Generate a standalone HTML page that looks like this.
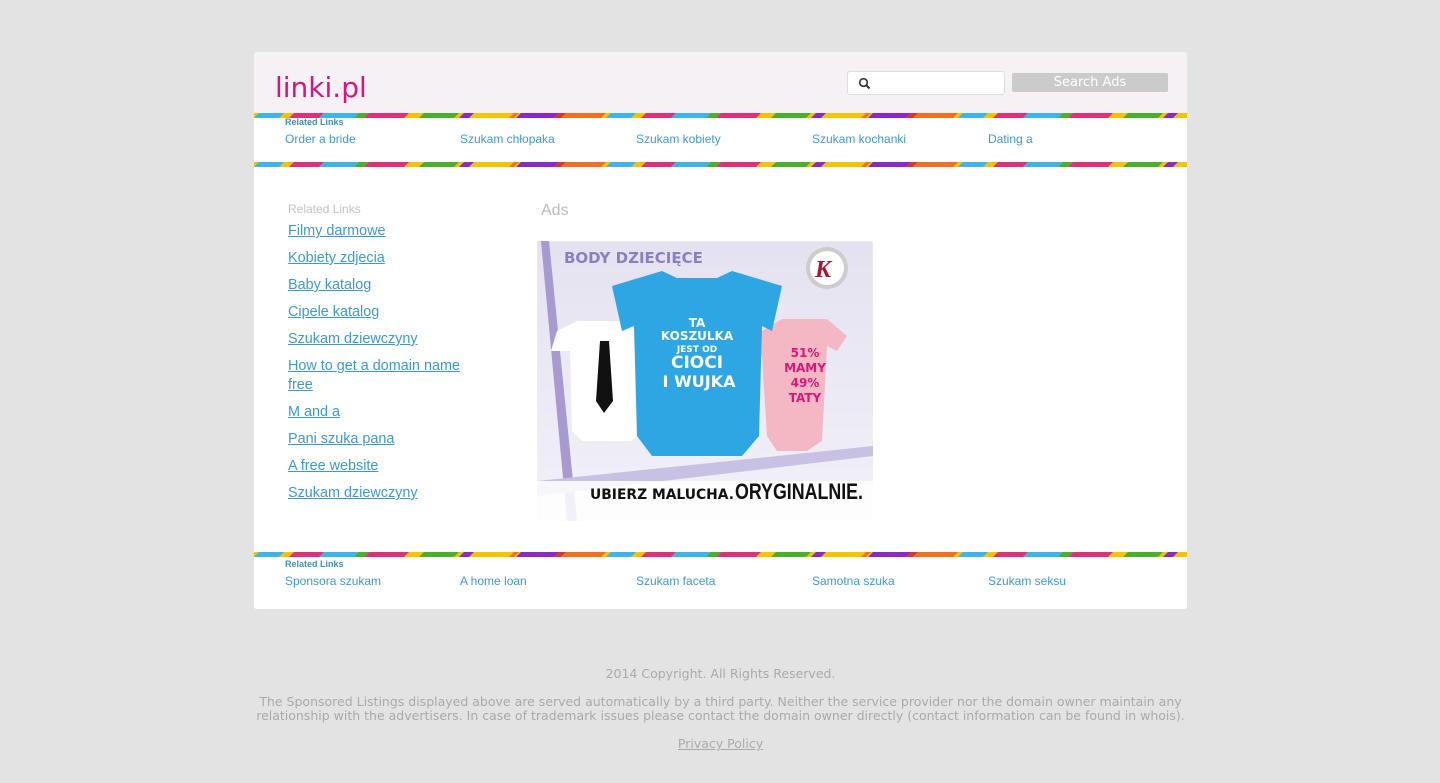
<!DOCTYPE html>
<html><head><meta charset="utf-8"><style>
body{margin:0;background:#e3e3e3;font-family:"DejaVu Sans","Liberation Sans",sans-serif;}
#box{position:absolute;left:254px;top:52px;width:933px;height:557px;background:#fff;border-radius:3px;overflow:hidden}
#hdr{height:61px;background:#f6f1f5}
#logo{position:absolute;left:21px;top:19px;font-size:28px;color:#d6167d;font-family:"DejaVu Sans",sans-serif}
#sinput{position:absolute;left:593px;top:19px;width:156px;height:22px;background:#fff;border:1px solid #e0dde0;border-radius:3px}
#sbtn{position:absolute;left:758px;top:21px;width:156px;height:19px;background:#cbcbcb;border-radius:2px;color:#fff;font-size:13px;text-align:center;line-height:20px}
.stripe{position:absolute;left:0;width:933px;height:5px}
.rl{position:absolute;left:31px;font-size:9px;color:#3d8fc4;font-weight:bold;font-family:"Liberation Sans",sans-serif}
.tl{position:absolute;font-size:12px;color:#3d9ad1;font-family:"Liberation Sans",sans-serif}
#side{position:absolute;left:34px;top:150px;width:190px;font-family:"Liberation Sans",sans-serif}
#side .h{font-size:12px;color:#c3c3c3;margin-bottom:6px}
#side a{display:block;color:#3d9ad1;font-size:14.4px;line-height:19px;margin-bottom:8px;text-decoration:underline}
#ads{position:absolute;left:287px;top:150px;font-size:16px;color:#bbb;font-family:"Liberation Sans",sans-serif}
#foot{position:absolute;top:667px;left:254px;width:933px;text-align:center;color:#aaa;font-size:12.5px;line-height:14px}
</style></head><body>
<svg width="0" height="0" style="position:absolute"><defs>
<pattern id="st" width="352" height="5" patternUnits="userSpaceOnUse">
<rect width="352" height="5" fill="#f5c400"/>
<polygon points="0,5 5,0 30,0 25,5" fill="#3db4ec"/>
<polygon points="35,5 40,0 70,0 65,5" fill="#e0307a"/>
<polygon points="65,5 70,0 105,0 100,5" fill="#3db4ec"/>
<polygon points="100,5 105,0 115,0 110,5" fill="#48b02a"/>
<polygon points="110,5 115,0 155,0 150,5" fill="#e0307a"/>
<polygon points="165,5 170,0 205,0 200,5" fill="#48b02a"/>
<polygon points="205,5 210,0 220,0 215,5" fill="#8a2ac4"/>
<polygon points="255,5 260,0 265,0 260,5" fill="#f07020"/>
<polygon points="262,5 267,0 305,0 300,5" fill="#8a2ac4"/>
<polygon points="300,5 305,0 312,0 307,5" fill="#e03030"/>
<polygon points="307,5 312,0 352,0 347,5" fill="#f07020"/>
</pattern></defs></svg>
<div id="box">
<div id="hdr"></div>
<div id="logo">linki.pl</div>
<div id="sinput"><svg width="14" height="14" style="position:absolute;left:10px;top:5px"><circle cx="5.5" cy="5.5" r="3.8" fill="none" stroke="#333" stroke-width="1.6"/><line x1="8.3" y1="8.3" x2="11.5" y2="11.5" stroke="#333" stroke-width="2"/></svg></div>
<div id="sbtn">Search Ads</div>
<svg class="stripe" style="top:61px"><rect width="933" height="5" fill="url(#st)"/></svg>
<div class="rl" style="top:65px">Related Links</div>
<div class="tl" style="left:31px;top:80px">Order a bride</div>
<div class="tl" style="left:206px;top:80px">Szukam chłopaka</div>
<div class="tl" style="left:382px;top:80px">Szukam kobiety</div>
<div class="tl" style="left:558px;top:80px">Szukam kochanki</div>
<div class="tl" style="left:734px;top:80px">Dating a</div>
<svg class="stripe" style="top:110px"><rect width="933" height="5" fill="url(#st)"/></svg>
<div id="side"><div class="h">Related Links</div>
<a>Filmy darmowe</a><a>Kobiety zdjecia</a><a>Baby katalog</a><a>Cipele katalog</a><a>Szukam dziewczyny</a><a>How to get a domain name free</a><a>M and a</a><a>Pani szuka pana</a><a>A free website</a><a>Szukam dziewczyny</a></div>
<div id="ads">Ads</div>
<svg style="position:absolute;left:283px;top:189px" width="336" height="280" viewBox="0 0 336 280">
<defs><linearGradient id="bg" x1="0" y1="0" x2="0" y2="1"><stop offset="0" stop-color="#e4e2f0"/><stop offset="1" stop-color="#f2f1f8"/></linearGradient></defs>
<rect width="336" height="280" fill="url(#bg)" stroke="#eee"/>
<polygon points="4,0 12,0 40,280 30,280" fill="#a89ad0"/>
<polygon points="0,240 336,205 336,215 0,255" fill="#c9c1e4"/>
<rect x="0" y="240" width="336" height="40" fill="#fff" opacity="0.85"/>
<text x="27" y="22" font-family="DejaVu Sans" font-weight="bold" font-size="15" fill="#8a80c0">BODY DZIECIĘCE</text>
<circle cx="290" cy="27" r="21" fill="#ccc"/><circle cx="290" cy="27" r="17" fill="#fff"/>
<text x="278" y="36" font-family="Liberation Serif" font-style="italic" font-weight="bold" font-size="24" fill="#b01030">K</text>
<path d="M20 90 L40 80 L100 80 L110 95 L105 190 L95 200 L45 200 L35 190 L33 110 L14 110Z" fill="#fff"/>
<polygon points="63,100 72,100 76,160 67,172 59,160" fill="#111"/>
<path d="M225 90 L245 78 L290 78 L310 95 L300 110 L290 105 L285 200 L270 210 L240 210 L230 195 L225 115 L215 110Z" fill="#f4b8c4"/>
<path d="M75 45 L125 30 L140 37 L180 37 L195 30 L245 45 L235 90 L225 85 L222 195 L205 215 L115 215 L100 195 L97 85 L85 90Z" fill="#2da6e3"/>
<g font-family="DejaVu Sans" font-weight="bold" fill="#fff" text-anchor="middle">
<text x="160" y="86" font-size="12">TA</text><text x="160" y="99" font-size="12">KOSZULKA</text>
<text x="160" y="111" font-size="9">JEST OD</text><text x="160" y="127" font-size="17">CIOCI</text><text x="162" y="146" font-size="16">I WUJKA</text></g>
<g font-family="DejaVu Sans" font-weight="bold" fill="#e01578" text-anchor="middle" font-size="12">
<text x="268" y="116">51%</text><text x="268" y="131">MAMY</text><text x="268" y="146">49%</text><text x="268" y="161">TATY</text></g>
<text x="53" y="258" font-family="DejaVu Sans" font-weight="bold" font-size="14" fill="#111" textLength="144" lengthAdjust="spacingAndGlyphs">UBIERZ MALUCHA.</text>
<text x="198" y="258" font-family="Liberation Sans" font-weight="bold" font-size="22" fill="#111" textLength="128" lengthAdjust="spacingAndGlyphs">ORYGINALNIE.</text>
</svg>
<svg class="stripe" style="top:500px"><rect width="933" height="5" fill="url(#st)"/></svg>
<div class="rl" style="top:507px">Related Links</div>
<div class="tl" style="left:31px;top:522px">Sponsora szukam</div>
<div class="tl" style="left:206px;top:522px">A home loan</div>
<div class="tl" style="left:382px;top:522px">Szukam faceta</div>
<div class="tl" style="left:558px;top:522px">Samotna szuka</div>
<div class="tl" style="left:734px;top:522px">Szukam seksu</div>
</div>
<div id="foot">2014 Copyright. All Rights Reserved.<br><br>The Sponsored Listings displayed above are served automatically by a third party. Neither the service provider nor the domain owner maintain any relationship with the advertisers. In case of trademark issues please contact the domain owner directly (contact information can be found in whois).<div style="margin-top:14px;text-decoration:underline">Privacy Policy</div></div>
</body></html>
